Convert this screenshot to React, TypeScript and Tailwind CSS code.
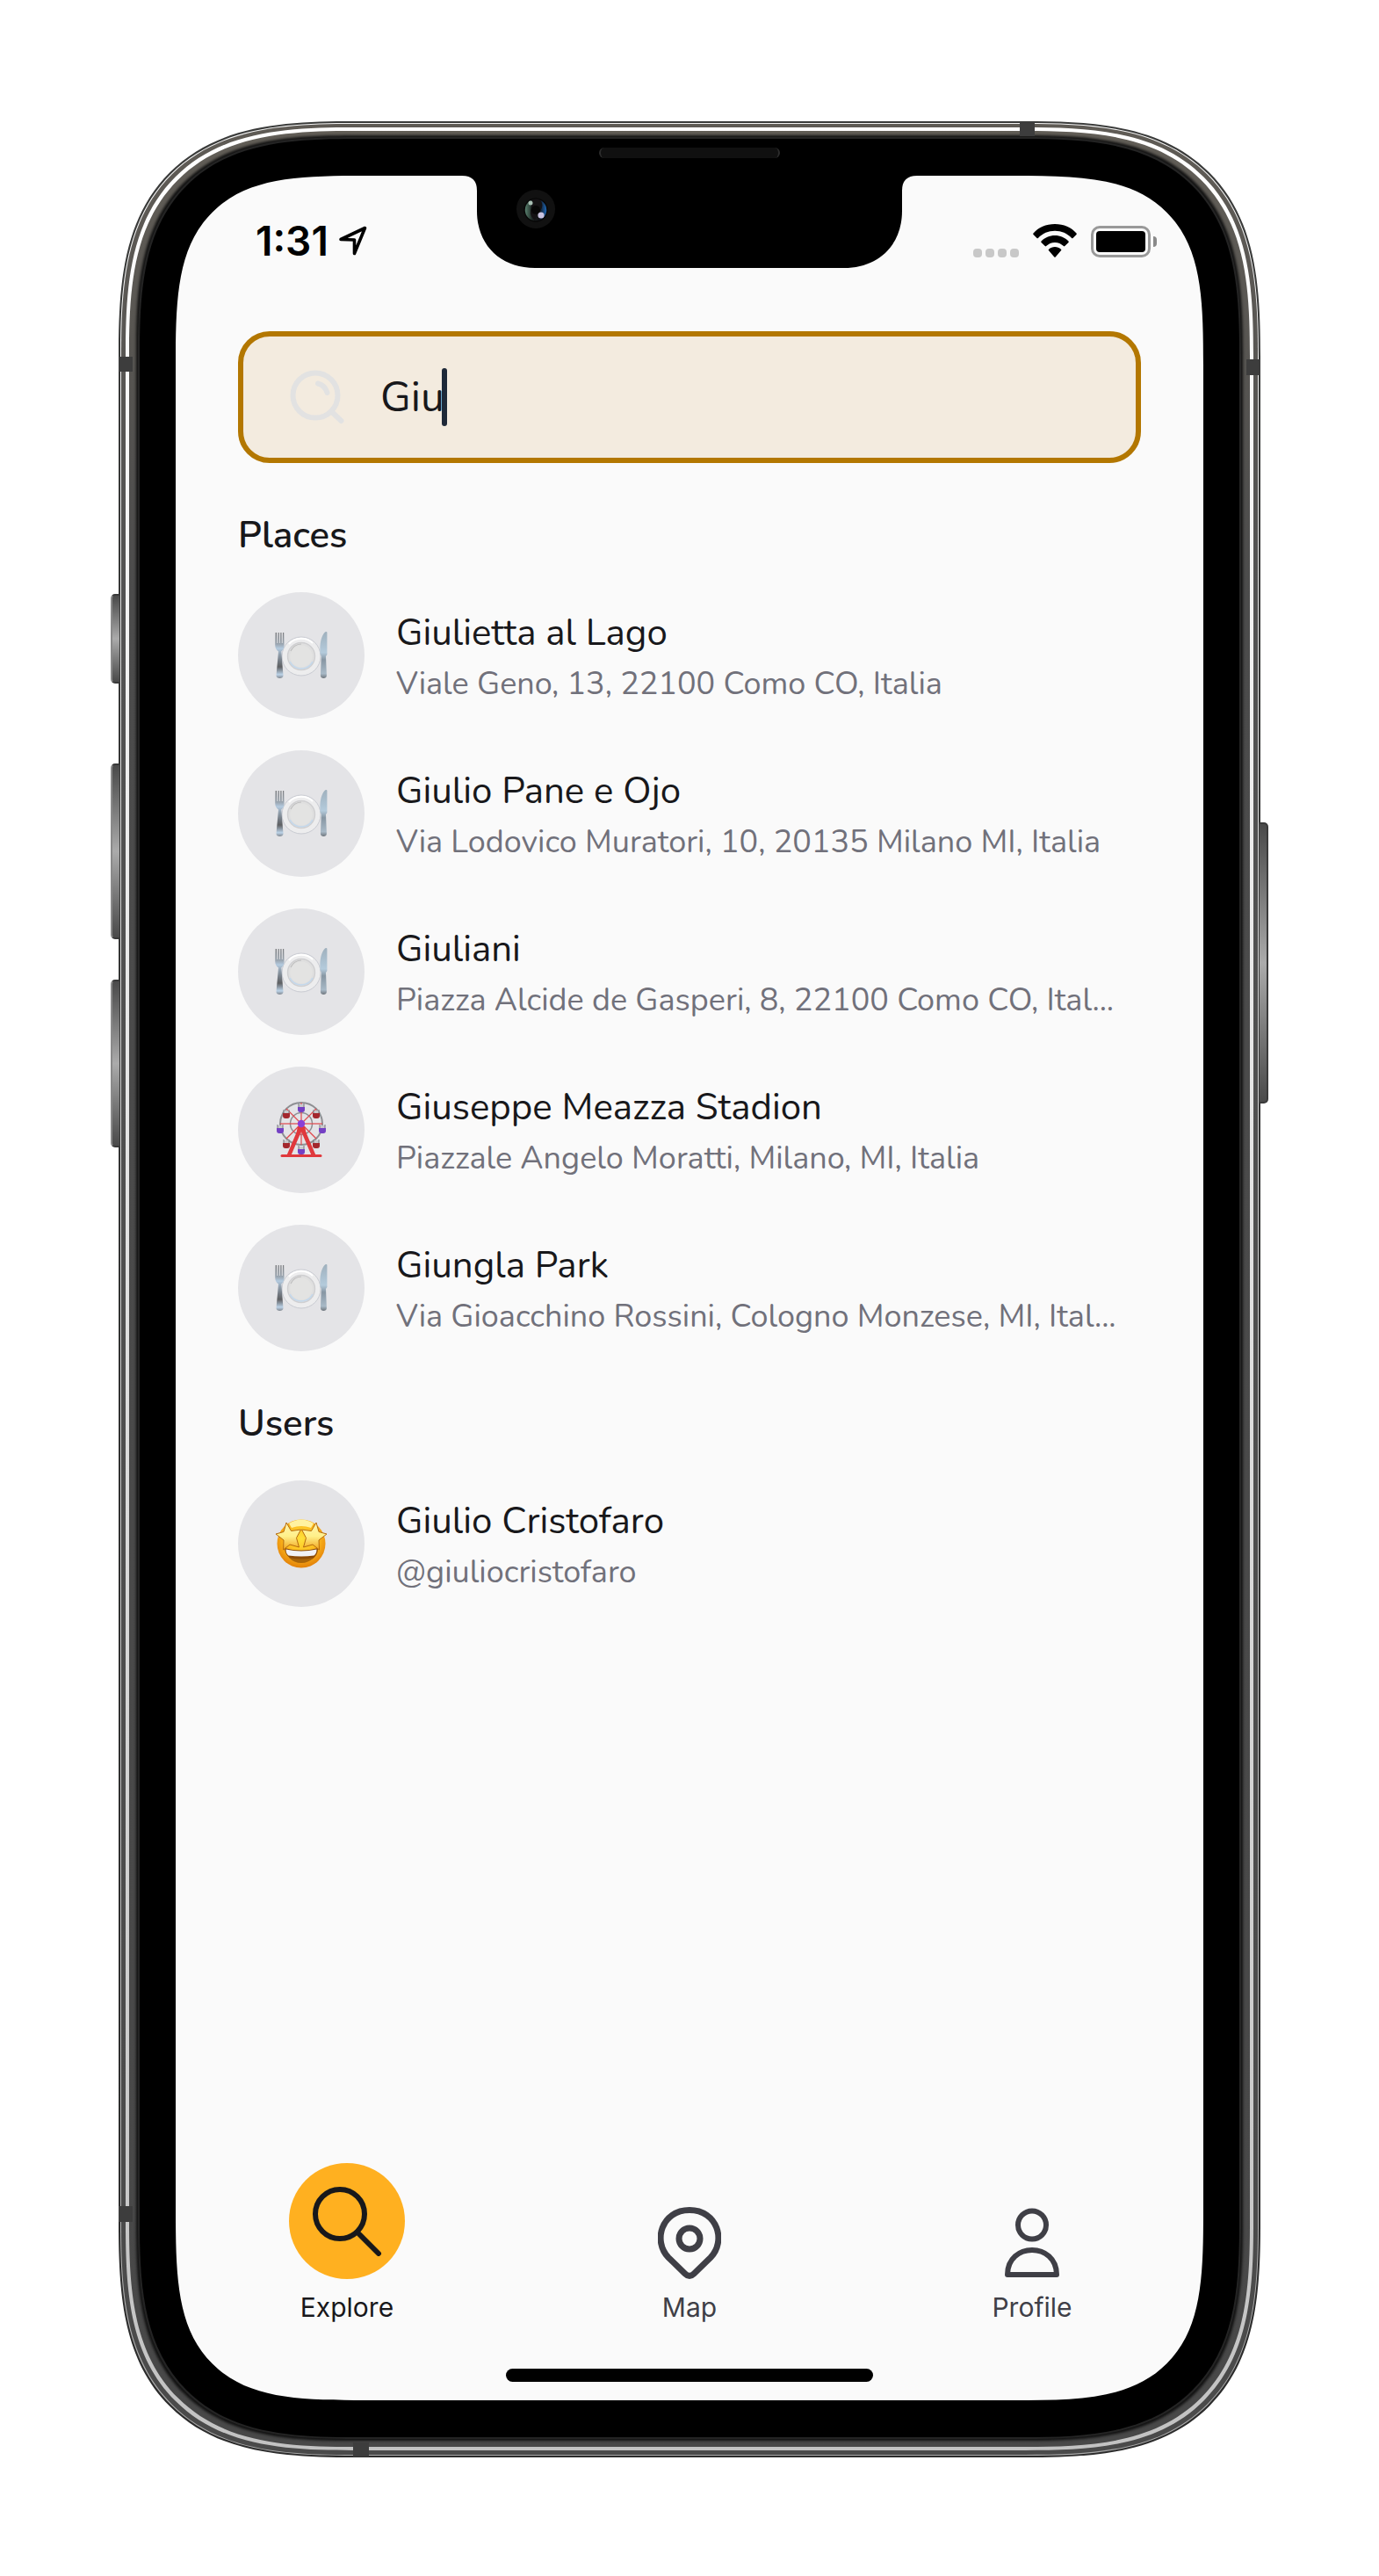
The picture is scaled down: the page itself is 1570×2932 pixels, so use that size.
import React from "react";

type IconProps = { className?: string };

const PlateIcon = ({ className }: IconProps) => (
  <svg viewBox="0 0 60 54" className={className} aria-hidden="true">
    <defs>
      <linearGradient id="fork" x1="0" y1="0" x2="0" y2="1">
        <stop offset="0" stopColor="#7b7d80" />
        <stop offset="0.25" stopColor="#9aa5b0" />
        <stop offset="0.35" stopColor="#b4cbe0" />
        <stop offset="0.48" stopColor="#8f9dab" />
        <stop offset="0.75" stopColor="#5e5f62" />
        <stop offset="0.92" stopColor="#bcd3e8" />
        <stop offset="1" stopColor="#7f868e" />
      </linearGradient>
      <linearGradient id="knife" x1="0" y1="0" x2="0" y2="1">
        <stop offset="0" stopColor="#9fb0bd" />
        <stop offset="0.45" stopColor="#b4cbdc" />
        <stop offset="0.6" stopColor="#8796a3" />
        <stop offset="0.9" stopColor="#a8b9c7" />
        <stop offset="1" stopColor="#6e757c" />
      </linearGradient>
    </defs>
    <circle cx="30" cy="28" r="22" fill="#ededee" stroke="#c9cbd2" strokeWidth="1" />
    <circle cx="30" cy="28" r="15.5" fill="#dfdfdf" stroke="#cfcfd1" strokeWidth="1.4" />
    <path d="M17 34a14.6 14.6 0 0 0 26 0" fill="none" stroke="#c3d8ec" strokeWidth="1.6" />
    <path d="M18 22a14 14 0 0 1 12-8" fill="none" stroke="#bdbdbd" strokeWidth="1.2" />
    <path d="M16 14a19 19 0 0 1 27 -1" fill="none" stroke="#ffffff" strokeWidth="2" />
    <circle cx="30" cy="28" r="12.5" fill="#e3e3e2" />
    <path
      d="M.6 1h1.4l.4 12h.9L3.6 1h1.2l.4 12h.7L6.3 1h1.2l.3 12h.9L9 1h1.2l.3 14c0 4-1.5 6-3.2 7.5L9.500 50c.1 4-8 4-8 0L4 22.500C2 21 .2 19 .2 15z"
      fill="url(#fork)"
    />
    <path
      d="M59.400 1v25l-1.400 2 .9 22c.1 4-7 4-7 0l.9-22-1.300-3c-.7-11 1-20 5.500-24.500.8-.8 2.400-.7 2.400.5z"
      fill="url(#knife)"
    />
  </svg>
);

const cabins = [0, 45, 90, 135, 180, 225, 270, 315].map((deg, i) => ({
  x: Math.round(28 + 24 * Math.sin((deg * Math.PI) / 180)),
  y: Math.round(25 - 24 * Math.cos((deg * Math.PI) / 180)),
  color: i % 2 ? "#a3272d" : "#7440c4",
}));

const FerrisWheelIcon = ({ className }: IconProps) => (
  <svg viewBox="0 0 56 64" className={className} aria-hidden="true">
    <g fill="none" stroke="#8f9094">
      <circle cx="28" cy="25" r="24" strokeWidth="2" />
      <circle cx="28" cy="25" r="12.5" strokeWidth="1.5" />
    </g>
    {cabins.map((c) => (
      <line key={`s${c.x}-${c.y}`} x1="28" y1="25" x2={c.x} y2={c.y} stroke="#e0474c" strokeWidth="1.2" />
    ))}
    {cabins.map((c) => (
      <g key={`c${c.x}-${c.y}`}>
        <rect x={c.x - 3} y={c.y + 2} width="6" height="4" fill="#c9c9cc" />
        <path d={`M${c.x - 4} ${c.y + 5}h8v3q0 3-3 3h-2q-3 0-3-3z`} fill={c.color} />
        <path d={`M${c.x - 3} ${c.y + 1}v4M${c.x + 3} ${c.y + 1}v4`} stroke="#77777c" strokeWidth="1" />
      </g>
    ))}
    <path d="M28 28L13.5 62M28 28L42.5 62" stroke="#e0393d" strokeWidth="4.5" fill="none" />
    <path d="M22 38q6-10 12 0l-2-10h-8z" fill="#e0393d" />
    <path d="M6 61.5h44" stroke="#e0393d" strokeWidth="3" strokeLinecap="round" />
    <circle cx="28" cy="25" r="4.2" fill="#8a3fd6" />
  </svg>
);

const StarFaceIcon = ({ className }: IconProps) => (
  <svg viewBox="0 0 60 56" className={className} aria-hidden="true">
    <defs>
      <radialGradient id="face" cx="0.5" cy="0.4" r="0.62">
        <stop offset="0" stopColor="#ffe23a" />
        <stop offset="0.6" stopColor="#fbb41a" />
        <stop offset="1" stopColor="#e07c08" />
      </radialGradient>
      <linearGradient id="star" x1="0" y1="0" x2="0" y2="1">
        <stop offset="0" stopColor="#fff3ae" />
        <stop offset="0.5" stopColor="#fff08a" />
        <stop offset="1" stopColor="#f2a51c" />
      </linearGradient>
    </defs>
    <circle cx="30" cy="28" r="27.5" fill="url(#face)" />
    <path d="M16 5q14-9 28 0l-3 5q-11-4-22 0z" fill="#fff2a0" />
    <path d="M11 33q19 5 38 0c1 21-37 21-38 0z" fill="#8c4a06" />
    <path d="M12.5 34.5q17.5 4 35 0 0 5-3 7-14.5 2-29 0-3-2-3-7z" fill="#f1f1f6" />
    <path d="M16 44q14 3 28 0-6 6-14 6t-14-6z" fill="#a8650a" />
    <g fill="url(#star)" stroke="#b56a0e" strokeWidth="1" strokeLinejoin="round">
      <path d="M13 4l5.500 9.500L29.500 12l-5 9.500 3 10.500-10.500-3-7.500 6 .5-11L1 17l9-2.500z" />
      <path d="M47 4l-5.500 9.500L30.500 12l5 9.500-3 10.500 10.500-3 7.500 6-.5-11L59 17l-9-2.500z" />
    </g>
  </svg>
);

const SearchHintIcon = ({ className }: IconProps) => (
  <svg viewBox="0 0 62 62" className={className} fill="none" stroke="#e2e2e2" strokeWidth="6" strokeLinecap="round" aria-hidden="true">
    <circle cx="29" cy="29" r="25.5" />
    <path d="M32 15.500q8 2 10.500 10.500M48 48l10.500 10" />
  </svg>
);

const ExploreIcon = ({ className }: IconProps) => (
  <svg viewBox="0 0 80 80" className={className} fill="none" stroke="#18181b" strokeWidth="6" strokeLinecap="round" aria-hidden="true">
    <circle cx="32" cy="32" r="28" />
    <path d="M53 54l23 23" />
  </svg>
);

const MapIcon = ({ className }: IconProps) => (
  <svg viewBox="0 0 72 82" className={className} fill="none" stroke="#3f3f46" strokeWidth="7" strokeLinejoin="round" aria-hidden="true">
    <path d="M60 57.500L41 76q-5 5-10 0L12 57.500C-6 39 4 3.500 36 3.500S78 39 60 57.500z" />
    <circle cx="36" cy="36" r="12" />
  </svg>
);

const ProfileIcon = ({ className }: IconProps) => (
  <svg viewBox="0 0 62 79" className={className} fill="none" stroke="#3f3f46" strokeWidth="6" strokeLinejoin="round" aria-hidden="true">
    <circle cx="31" cy="19" r="16" />
    <path d="M3 75.500C3 38 59 38 59 75.500z" />
  </svg>
);

const LocationIcon = ({ className }: IconProps) => (
  <svg viewBox="0 0 32 34" className={className} fill="none" stroke="#000" strokeWidth="3.6" strokeLinejoin="round" aria-hidden="true">
    <path d="M2 15.500L29.500 2.500 17.500 31.500V16z" />
  </svg>
);

const WifiIcon = ({ className }: IconProps) => (
  <svg viewBox="0 0 50 38" className={className} aria-hidden="true">
    <path d="M25 0C15 0 6 4 .5 10.500q-.6.7 0 1.400l4 4q.7.6 1.400 0C11 10.500 17.500 7.700 25 7.700s14 2.800 19.100 8.200q.7.600 1.400 0l4-4q.600-.7 0-1.400C44 4 35 0 25 0z" />
    <path d="M25 13c-6 0-11.500 2.500-15.500 6.500q-.6.7 0 1.400l4.200 4.200q.7.6 1.400 0c2.700-2.700 6-4.200 9.900-4.200s7.200 1.500 9.900 4.200q.7.600 1.400 0l4.200-4.200q.600-.7 0-1.400C36.500 15.500 31 13 25 13z" />
    <path d="M25 26c-2.600 0-5 1-6.900 2.700q-.8.700 0 1.500l6.200 7.300q.7.700 1.400 0l6.200-7.300q.8-.8 0-1.500C30 27 27.600 26 25 26z" />
  </svg>
);

const Notch = () => (
  <svg viewBox="0 0 518 106" className="absolute top-0 left-1/2 h-[106px] w-[518px] -translate-x-1/2" aria-hidden="true">
    <defs>
      <linearGradient id="lens" x1="0" y1="0" x2="1" y2="0">
        <stop offset="0" stopColor="#5f8a76" />
        <stop offset="0.35" stopColor="#1c2523" />
        <stop offset="0.65" stopColor="#101014" />
        <stop offset="1" stopColor="#1f6fc4" />
      </linearGradient>
    </defs>
    <path d="M0 0Q17 0 17 17V40C17 80 45 105 83 105H435C473 105 501 80 501 40V17Q501 0 518 0z" fill="#000" />
    <circle cx="84" cy="38" r="22" fill="#111" />
    <circle cx="84" cy="39" r="13" fill="url(#lens)" stroke="#080808" strokeWidth="1.5" />
    <path d="M80 27q9-2 11 4t-5 12l-3 8q-6-5-5-11t2-13z" fill="#141214" />
    <circle cx="84" cy="39" r="5" fill="#070707" />
    <circle cx="78" cy="31" r="2.5" fill="#a9bfb4" />
    <circle cx="90" cy="45" r="3.6" fill="#c9c3e0" />
  </svg>
);

type Entry = { title: string; detail: string; Icon: (p: IconProps) => React.ReactElement; iconClass: string };

const plate = { Icon: PlateIcon, iconClass: "h-[54px] w-[60px]" };

const places: Entry[] = [
  { title: "Giulietta al Lago", detail: "Viale Geno, 13, 22100 Como CO, Italia", ...plate },
  { title: "Giulio Pane e Ojo", detail: "Via Lodovico Muratori, 10, 20135 Milano MI, Italia", ...plate },
  { title: "Giuliani", detail: "Piazza Alcide de Gasperi, 8, 22100 Como CO, Ital...", ...plate },
  { title: "Giuseppe Meazza Stadion", detail: "Piazzale Angelo Moratti, Milano, MI, Italia", Icon: FerrisWheelIcon, iconClass: "h-[64px] w-[56px]" },
  { title: "Giungla Park", detail: "Via Gioacchino Rossini, Cologno Monzese, MI, Ital...", ...plate },
];

const users: Entry[] = [
  { title: "Giulio Cristofaro", detail: "@giuliocristofaro", Icon: StarFaceIcon, iconClass: "h-[56px] w-[60px]" },
];

const ResultSection = ({ heading, entries }: { heading: string; entries: Entry[] }) => (
  <section className="pt-[55px]">
    <h2 className="text-[42px] leading-[56px] font-semibold">{heading}</h2>
    <ul className="mt-9 flex flex-col gap-9">
      {entries.map(({ title, detail, Icon, iconClass }) => (
        <li key={title}>
          <a href="#" className="flex items-center gap-9">
            <span className="grid size-36 shrink-0 place-items-center rounded-full bg-zinc-200">
              <Icon className={iconClass} />
            </span>
            <span className="flex min-w-0 flex-col whitespace-nowrap">
              <span className="text-[42px] leading-[66px]">{title}</span>
              <span className="text-[36px] leading-[50px] text-zinc-500">{detail}</span>
            </span>
          </a>
        </li>
      ))}
    </ul>
  </section>
);

const StatusBar = () => (
  <div className="flex h-[148px] items-center justify-between pr-[53px] pl-[91px]">
    <div className="flex items-center gap-3">
      <span className="font-['Inter',sans-serif] text-[46px] leading-none font-semibold text-black">1:31</span>
      <LocationIcon className="h-[34px] w-[32px]" />
    </div>
    <div className="flex items-end gap-4">
      <span className="flex gap-1">
        <span className="size-[10px] rounded-[4px] bg-[#c8c8c8]" />
        <span className="size-[10px] rounded-[4px] bg-[#c8c8c8]" />
        <span className="size-[10px] rounded-[4px] bg-[#c8c8c8]" />
        <span className="size-[10px] rounded-[4px] bg-[#c8c8c8]" />
      </span>
      <WifiIcon className="h-[38px] w-[50px]" />
      <span className="flex items-center gap-[3px]">
        <span className="h-9 w-[68px] rounded-[10px] border-[3px] border-[#999] p-[3px]">
          <span className="block h-full rounded-[4px] bg-black" />
        </span>
        <span className="h-3 w-1 rounded-r-full bg-[#8a8a8a]" />
      </span>
    </div>
  </div>
);

const TabBar = () => (
  <nav className="mt-auto grid grid-cols-3 items-end font-['Inter',sans-serif] text-[30px] leading-9">
    <a href="#" aria-current="page" className="flex flex-col items-center gap-[14px]">
      <span className="grid size-[132px] place-items-center rounded-full bg-[#ffb020]">
        <ExploreIcon className="size-20" />
      </span>
      Explore
    </a>
    <a href="#" className="flex flex-col items-center gap-[14px] text-zinc-700">
      <MapIcon className="h-[82px] w-[72px]" />
      Map
    </a>
    <a href="#" className="flex flex-col items-center gap-[14px] text-zinc-700">
      <ProfileIcon className="h-[82px] w-[62px]" />
      Profile
    </a>
  </nav>
);

const Frame = ({ children }: { children: React.ReactNode }) => (
  <div className="flex grow rounded-[200px] bg-gradient-to-b from-[#3a3b3a] to-[#2c2c2c] p-[2px] supports-[corner-shape:squircle]:rounded-[268px] supports-[corner-shape:squircle]:[corner-shape:superellipse(1.5)]">
    <div className="flex grow rounded-[198px] bg-gradient-to-b from-[#f4f4f4] to-[#a8a8a8] p-px supports-[corner-shape:squircle]:rounded-[266px] supports-[corner-shape:squircle]:[corner-shape:superellipse(1.5)]">
      <div className="flex grow rounded-[197px] bg-gradient-to-b from-[#5f5b55] via-[#525252] via-20% to-[#4a4a4a] px-[5px] pt-1 pb-[5px] supports-[corner-shape:squircle]:rounded-[265px] supports-[corner-shape:squircle]:[corner-shape:superellipse(1.5)]">
        <div className="flex grow rounded-[192px] bg-gradient-to-b from-white to-[#c2c2c2] p-1 supports-[corner-shape:squircle]:rounded-[260px] supports-[corner-shape:squircle]:[corner-shape:superellipse(1.5)]">
          <div className="flex grow rounded-[188px] bg-gradient-to-b from-[#625e57] via-[#4c4c4c] via-20% to-[#484848] px-[10px] pt-[7px] pb-[9px] supports-[corner-shape:squircle]:rounded-[256px] supports-[corner-shape:squircle]:[corner-shape:superellipse(1.5)]">
            <div className="flex grow rounded-[178px] bg-[#242424] p-[2px] shadow-[0_0_3px_2px_#111] supports-[corner-shape:squircle]:rounded-[248px] supports-[corner-shape:squircle]:[corner-shape:superellipse(1.5)]">
              <div className="flex grow rounded-[176px] bg-black px-[41px] py-[42px] supports-[corner-shape:squircle]:rounded-[246px] supports-[corner-shape:squircle]:[corner-shape:superellipse(1.5)]">
                {children}
              </div>
            </div>
          </div>
        </div>
      </div>
    </div>
  </div>
);

const SideButton = ({ className }: { className: string }) => (
  <span
    className={`absolute w-[10px] border-2 border-[#3a3a3a] bg-gradient-to-b from-[#4a4a4a] via-[#ababab] to-[#4a4a4a] ${className}`}
  />
);

export default function App() {
  return (
    <main className="flex min-h-screen bg-white px-[135px] pt-[138px] pb-[135px] font-['Nunito','Lato',sans-serif] text-zinc-900">
      <div className="relative mx-auto flex w-full max-w-[1300px]">
        <SideButton className="top-[538px] -left-[9px] h-[102px] rounded-l-[5px] border-r-0 border-l-[#8a8a8a]" />
        <SideButton className="top-[731px] -left-[9px] h-[200px] rounded-l-[5px] border-r-0 border-l-[#8a8a8a]" />
        <SideButton className="top-[977px] -left-[9px] h-[191px] rounded-l-[5px] border-r-0 border-l-[#8a8a8a]" />
        <SideButton className="top-[798px] -right-[9px] h-[320px] rounded-r-[5px] border-l-0" />
        <Frame>
          <div className="relative flex grow flex-col overflow-hidden rounded-[142px] bg-[#fafafa] supports-[corner-shape:squircle]:rounded-[217px] supports-[corner-shape:squircle]:[corner-shape:superellipse(1.7)]">
            <Notch />
            <StatusBar />
            <div className="flex flex-col px-[71px] pt-[29px]">
              <div className="flex h-[150px] items-center rounded-[36px] border-[6px] border-[#b37700] bg-[#f3ebdf] pl-[53px]">
                <SearchHintIcon className="size-[62px]" />
                <input
                  type="text"
                  aria-label="Search"
                  defaultValue="Giu"
                  className="ml-[41px] [field-sizing:content] text-[48px] leading-[60px] caret-gray-800 outline-none"
                />
                <span className="-ml-[3px] h-[66px] w-[6px] rounded-full bg-gray-800" />
              </div>
              <ResultSection heading="Places" entries={places} />
              <ResultSection heading="Users" entries={users} />
            </div>
            <TabBar />
            <div className="mx-auto mt-[52px] mb-[21px] h-[15px] w-[418px] rounded-full bg-black" />
          </div>
        </Frame>
        <span className="absolute top-[268px] left-0 h-[17px] w-4 bg-[#3d3d3d]" />
        <span className="absolute bottom-[268px] left-0 h-[18px] w-4 bg-[#3d3d3d]" />
        <span className="absolute top-[271px] right-0 h-[18px] w-4 bg-[#3d3d3d]" />
        <span className="absolute top-px right-[257px] h-4 w-[17px] bg-[#3d3d3d]" />
        <span className="absolute bottom-px left-[267px] h-4 w-[18px] bg-[#3d3d3d]" />
        <span className="absolute top-[30px] left-1/2 h-3 w-[206px] -translate-x-1/2 rounded-full border-x-2 border-[#2c2c2c] bg-[#101010]" />
      </div>
    </main>
  );
}
